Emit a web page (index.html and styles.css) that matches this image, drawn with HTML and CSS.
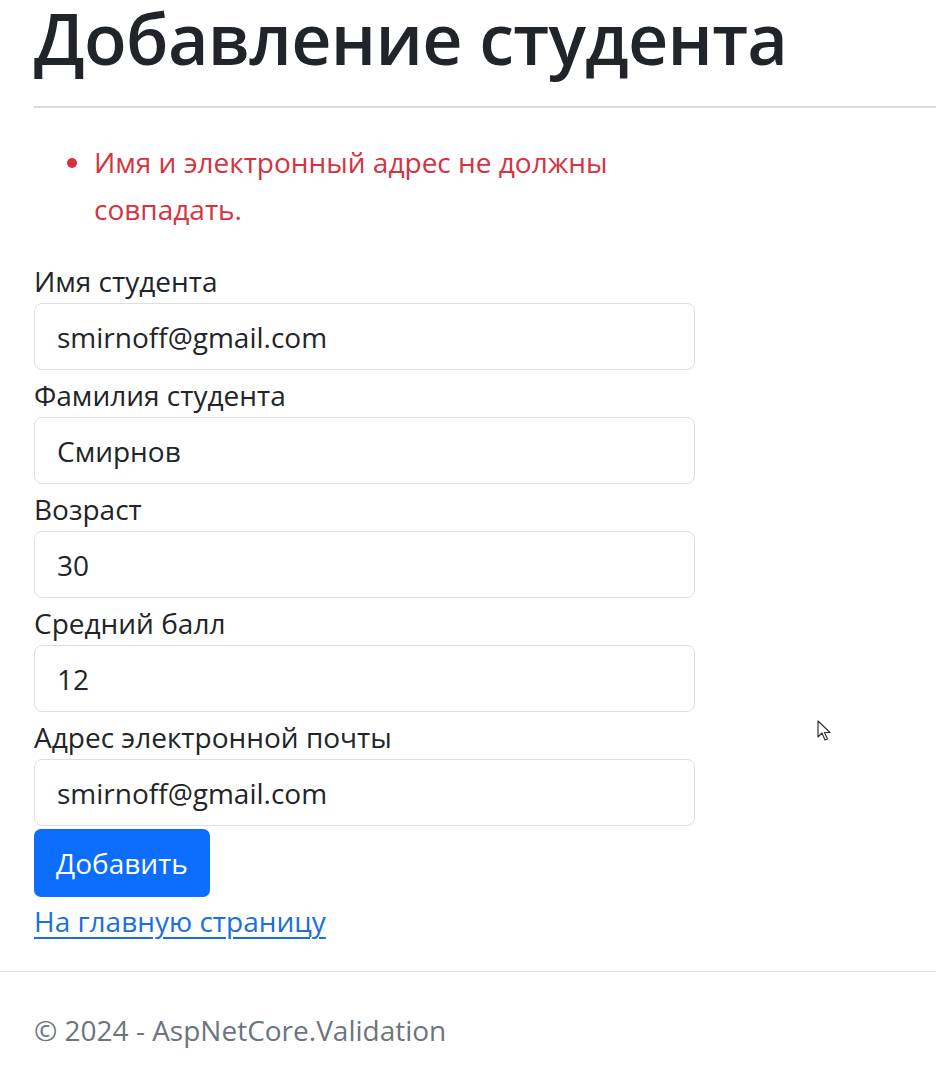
FILE: index.html
```html
<!DOCTYPE html>
<html lang="ru">
<head>
<meta charset="utf-8">
<title>Добавление студента</title>
<link rel="stylesheet" href="styles.css">
</head>
<body>
<main class="container">
  <h1 class="title">Добавление студента</h1>
  <hr class="divider">
  <form class="form">
    <ul class="summary">
      <li>Имя и электронный адрес не должны совпадать.</li>
    </ul>
    <div class="group">
      <label class="label">Имя студента</label>
      <input class="input" type="text" value="smirnoff@gmail.com">
    </div>
    <div class="group">
      <label class="label">Фамилия студента</label>
      <input class="input" type="text" value="Смирнов">
    </div>
    <div class="group">
      <label class="label">Возраст</label>
      <input class="input" type="text" value="30">
    </div>
    <div class="group">
      <label class="label">Средний балл</label>
      <input class="input" type="text" value="12">
    </div>
    <div class="group last">
      <label class="label">Адрес электронной почты</label>
      <input class="input" type="text" value="smirnoff@gmail.com">
    </div>
    <button class="btn" type="button">Добавить</button>
  </form>
  <a class="home" href="#">На главную страницу</a>
</main>
<footer class="footer">
  <div class="footer-inner">© 2024 - AspNetCore.Validation</div>
</footer>
<svg class="cursor" width="14" height="22" viewBox="0 0 14 22" aria-hidden="true">
  <path d="M1 1 L1 17 L5 13 L8 20 L10.5 19 L7.5 12.5 L13 12.5 Z" fill="#fff" stroke="#333" stroke-width="1.2" stroke-linejoin="round"/>
</svg>
</body>
</html>
```
FILE: styles.css
```css
html, body {
  margin: 0;
  padding: 0;
  background: #fff;
}
body {
  font-family: "Open Sans", "Noto Sans", sans-serif;
  font-size: 28px;
  line-height: 1.5;
  color: #212529;
  position: relative;
  min-height: 1072px;
}
.container {
  padding: 0 0 0 34px;
}
.title {
  margin: 0;
  padding-top: 2px;
  font-size: 70px;
  font-weight: 600;
  line-height: 73px;
  color: #212529;
  letter-spacing: -0.7px;
}
.divider {
  margin: 31px 0 0 0;
  border: 0;
  border-top: 2px solid #dcdcdc;
  height: 0;
}
.form {
  width: 661px;
  margin: 0;
}
.summary {
  margin: 31px 0 27px 0;
  padding-left: 60px;
  color: #d63341;
  line-height: 47px;
  width: 560px;
}
.group {
  display: flex;
  flex-direction: column;
  margin-bottom: 4px;
}
.group.last {
  margin-bottom: 3px;
}
.label {
  line-height: 43px;
  display: block;
}
.input {
  box-sizing: border-box;
  height: 67px;
  width: 661px;
  border: 1.5px solid #dcdfe3;
  border-radius: 8px;
  padding: 0 22px;
  font-family: inherit;
  font-size: 28px;
  color: #212529;
  background: #fff;
  margin: 0;
  outline: none;
}
.btn {
  display: block;
  height: 68px;
  padding: 0 22px;
  border: 0;
  border-radius: 7px;
  background: #0d6efd;
  color: #fff;
  font-family: inherit;
  font-size: 28px;
  cursor: pointer;
}
.home {
  display: inline-block;
  margin-top: 3px;
  color: #1a6fe0;
  text-decoration: underline;
  text-decoration-thickness: 2px;
  text-underline-offset: 5px;
  line-height: 42px;
}
.footer {
  margin-top: 29px;
  border-top: 1.5px solid #dee2e6;
}
.footer-inner {
  padding: 37px 0 0 34px;
  color: #6c757d;
  line-height: 42px;
}
.cursor {
  position: absolute;
  left: 817px;
  top: 720px;
}
```
